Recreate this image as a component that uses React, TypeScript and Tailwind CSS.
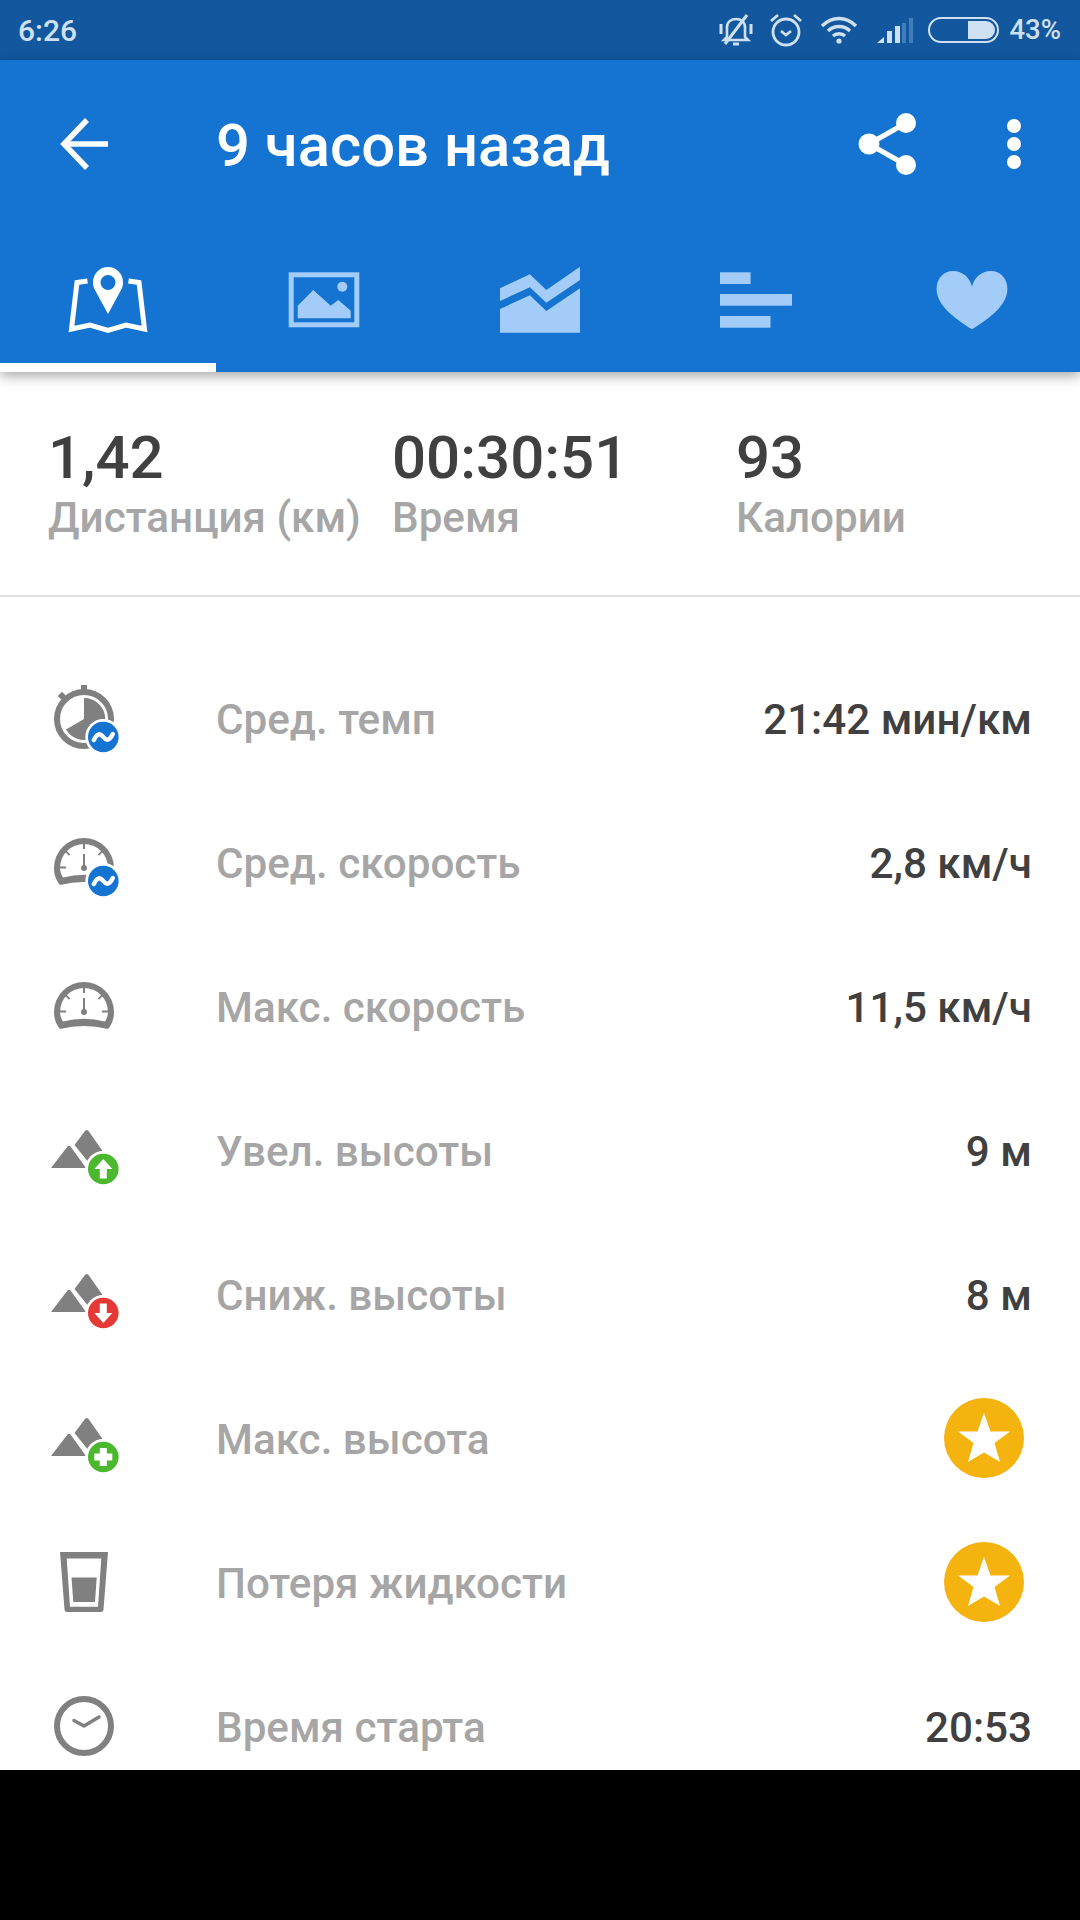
import React from 'react';

const GRAY = '#808080';
const LIGHT = '#A3CDF8';
const BLUE = '#1574D1';

const Wave = () => (
    <path d="M-9.5 2 C-6 -5 -3 -5 0 -1 C3 3 6 3 9.5 -4" fill="none" stroke="white" strokeWidth="4.4" strokeLinecap="round" transform="translate(0 1)" />
);

const Badge = ({ color, children }: { color: string; children: React.ReactNode }) => (
    <g transform="translate(55.3 57)">
        <circle r="18" fill="white" />
        <circle r="15.3" fill={color} />
        {children}
    </g>
);

const Stopwatch = () => (
    <svg width="80" height="80" viewBox="0 0 80 80">
        <circle cx="36" cy="39" r="27" fill="none" stroke={GRAY} strokeWidth="6" />
        <rect x="33" y="5" width="6" height="6" fill={GRAY} />
        <rect x="11" y="13" width="6" height="6" fill={GRAY} transform="rotate(-45 14 16)" />
        <path d="M36 39 V18 A21 21 0 1 1 18 49.5 Z" fill={GRAY} />
        <Badge color={BLUE}><Wave /></Badge>
    </svg>
);

const GaugeBody = () => (
    <g fill={GRAY}>
        <path fillRule="evenodd" d="M12 61 C8 56 6 51 6 44 A30 30 0 0 1 66 44 C66 51 64 56 60 61 Q36 55 12 61Z M15 53.5 C13 50 12 47 12 44 A24 24 0 0 1 60 44 C60 47 59 50 57 53.5 Q36 48 15 53.5Z" />
        <rect x="35" y="19" width="2" height="6" />
        <rect x="12" y="42.5" width="6" height="2" />
        <rect x="54" y="42.5" width="6" height="2" />
        <rect x="18.5" y="26" width="2" height="6" transform="rotate(-45 19.5 29)" />
        <rect x="51.5" y="26" width="2" height="6" transform="rotate(45 52.5 29)" />
        <rect x="35" y="30" width="2" height="13" />
        <circle cx="36" cy="44" r="3" />
    </g>
);

const AvgGauge = () => (
    <svg width="80" height="80" viewBox="0 0 80 80">
        <GaugeBody />
        <Badge color={BLUE}><Wave /></Badge>
    </svg>
);

const MaxGauge = () => (
    <svg width="80" height="80" viewBox="0 0 80 80">
        <GaugeBody />
    </svg>
);

const Mountain = ({ color, children }: { color: string; children: React.ReactNode }) => (
    <svg width="80" height="80" viewBox="0 0 80 80">
        <path d="M3 56 L19.5 34.5 Q21 33 22.5 34.5 L38 56 Z" fill={GRAY} />
        <path d="M26.5 33 L37 19 Q38.7 17 40.5 19 L56 41 L41 51 Z" fill={GRAY} />
        <Badge color={color}>{children}</Badge>
    </svg>
);

const ArrowUp = () => <path d="M0 -10 L9 0 H3.5 V9.5 H-3.5 V0 H-9 Z" fill="white" />;
const ArrowDown = () => <path d="M0 10 L9 0 H3.5 V-9.5 H-3.5 V0 H-9 Z" fill="white" />;
const Plus = () => <path d="M-3.5 -9 H3.5 V-3.5 H9 V3.5 H3.5 V9 H-3.5 V3.5 H-9 V-3.5 H-3.5 Z" fill="white" />;

const Glass = () => (
    <svg width="80" height="80" viewBox="0 0 80 80">
        <path fillRule="evenodd" d="M12 8 H60 L55.5 65.5 Q55.3 68 53 68 H19 Q16.7 68 16.5 65.5 Z M18.7 14.5 L22 62.7 H50 L53.3 14.5 Z" fill={GRAY} />
        <path d="M23.5 33.5 H48.7 L47 58 H25.3 Z" fill={GRAY} />
    </svg>
);

const Clock = () => (
    <svg width="80" height="80" viewBox="0 0 80 80">
        <circle cx="36" cy="38" r="27" fill="none" stroke={GRAY} strokeWidth="6" />
        <path d="M26 32.5 L36 38 L51 29" fill="none" stroke={GRAY} strokeWidth="3.5" strokeLinecap="round" strokeLinejoin="round" />
    </svg>
);

const StarBadge = () => (
    <svg width="80" height="80" viewBox="-40 -40 80 80" className="mr-[8px] mb-[4px]">
        <circle r="40" fill="#F4B30F" />
        <path d="M0 -25 L6.5 -6.5 L26 -6.5 L10.5 5 L16 24 L0 14.5 L-16 24 L-10.5 5 L-26 -6.5 L-6.5 -6.5 Z" fill="white" />
    </svg>
);

const TabIcon = ({ children }: { children: React.ReactNode }) => (
    <div className="flex items-center justify-center h-[144px]">
        <svg width="80" height="80" viewBox="0 0 80 80">{children}</svg>
    </div>
);

const rows = [
    { icon: <Stopwatch />, label: 'Сред. темп', value: '21:42 мин/км' },
    { icon: <AvgGauge />, label: 'Сред. скорость', value: '2,8 км/ч' },
    { icon: <MaxGauge />, label: 'Макс. скорость', value: '11,5 км/ч' },
    { icon: <Mountain color="#4CB82E"><ArrowUp /></Mountain>, label: 'Увел. высоты', value: '9 м' },
    { icon: <Mountain color="#E53935"><ArrowDown /></Mountain>, label: 'Сниж. высоты', value: '8 м' },
    { icon: <Mountain color="#4CB82E"><Plus /></Mountain>, label: 'Макс. высота', value: null },
    { icon: <Glass />, label: 'Потеря жидкости', value: null },
    { icon: <Clock />, label: 'Время старта', value: '20:53' },
];

const stats = [
    { value: '1,42', label: 'Дистанция (км)', width: 'w-[344px]' },
    { value: '00:30:51', label: 'Время', width: 'w-[344px]' },
    { value: '93', label: 'Калории', width: 'w-[300px]' },
];

const StatusBar = () => (
    <div className="flex items-center h-[60px] bg-[#13579F] pl-[18px] pr-[19px] text-[#CFE0F2] text-[30px] font-medium">
        <span>6:26</span>
        <div className="flex items-center ml-auto">
            <svg width="36" height="34" viewBox="0 0 36 34" className="mr-[15px]" fill="none" stroke="#CFE0F2" strokeWidth="2.6">
                <path d="M9 24 V14 C9 9 13 6 18 6 C23 6 27 9 27 14 V24 L30 27 H6 Z" />
                <path d="M15 31 H21" strokeWidth="3" />
                <path d="M3 11 V21 M33 11 V21" strokeWidth="3" />
                <path d="M29 2 L7 31" strokeWidth="3" />
            </svg>
            <svg width="34" height="34" viewBox="0 0 34 34" className="mr-[17px]" fill="none" stroke="#CFE0F2" strokeWidth="2.8">
                <circle cx="17" cy="19" r="13" />
                <path d="M12 18 L17 22 L22 18" />
                <path d="M2 8 L9 2 M32 8 L25 2" />
            </svg>
            <svg width="38" height="28" viewBox="0 0 38 28" className="mr-[19px]" fill="none" stroke="#CFE0F2" strokeWidth="3.4">
                <path d="M2 10 C12 0 26 0 36 10" />
                <path d="M8 15 C14 9 24 9 30 15" />
                <path d="M13 20 C16 17 22 17 25 20" />
                <circle cx="19" cy="25" r="2.6" fill="#CFE0F2" stroke="none" />
            </svg>
            <svg width="36" height="25" viewBox="0 0 36 25" className="mr-[15px]">
                <path d="M0 25 L7 19 V25 Z" fill="#CFE0F2" />
                <rect x="10" y="13" width="5" height="12" fill="#CFE0F2" />
                <rect x="18" y="8" width="5" height="17" fill="#CFE0F2" />
                <rect x="25" y="5" width="4" height="20" fill="#3F7DBB" />
                <rect x="32" y="0" width="4" height="25" fill="#3F7DBB" />
            </svg>
            <div className="relative w-[71px] h-[26px] rounded-full border-[2.5px] border-[#CFE0F2] mr-[10px]">
                <div className="absolute top-[2px] bottom-[2px] right-[2px] w-[27px] rounded-r-full bg-[#CFE0F2]" />
            </div>
            <span className="text-[27.5px]">43%</span>
        </div>
    </div>
);

const AppBar = () => (
    <div className="relative bg-[#1574D1] shadow-[0_4px_12px_rgba(0,0,0,0.35)]">
        <div className="flex items-center h-[168px] pl-[60px]">
            <svg width="50" height="52" viewBox="0 0 50 52" fill="none" stroke="white" strokeWidth="5.5">
                <path d="M48 26 H4" />
                <path d="M27 2 L4 26 L27 50" />
            </svg>
            <span className="ml-[106px] mt-[6px] text-[59.8px] font-medium text-white whitespace-nowrap">9 часов назад</span>
            <svg width="60" height="62" viewBox="0 0 60 62" className="ml-auto mr-[88px]" fill="white">
                <path d="M11 31 L48 10 M11 31 L48 52" stroke="white" strokeWidth="5" />
                <circle cx="11" cy="31" r="10.5" />
                <circle cx="48" cy="10" r="10" />
                <circle cx="48" cy="52" r="10" />
            </svg>
            <svg width="16" height="50" viewBox="0 0 16 50" className="mr-[58px]" fill="white">
                <circle cx="8" cy="7" r="7" />
                <circle cx="8" cy="25" r="7" />
                <circle cx="8" cy="43" r="7" />
            </svg>
        </div>
        <div className="grid grid-cols-5">
            <div className="border-b-[9px] border-white h-[144px] flex justify-center pt-[32px]">
                <svg width="80" height="80" viewBox="0 0 80 80">
                    <path d="M19.5 21 L9 22.5 L3.5 69 L22 65 L40 70.5 L58 65 L76.5 69 L71 22.5 L60.5 21" fill="none" stroke="white" strokeWidth="5" />
                    <path fillRule="evenodd" d="M40 54 L27.5 31 C25.5 27.5 25 25.5 25 22 A15 15 0 0 1 55 22 C55 25.5 54.5 27.5 52.5 31 Z M40 15 A7.5 7.5 0 1 0 40 30 A7.5 7.5 0 1 0 40 15 Z" fill="white" />
                </svg>
            </div>
            <TabIcon>
                <rect x="7.2" y="14.8" width="65.6" height="50" fill="none" stroke={LIGHT} strokeWidth="5" />
                <path d="M13.7 45.7 L29.3 30 L46.7 45.7 L54.3 40 L66.7 50.7 V58.3 H13.7 Z" fill={LIGHT} />
                <circle cx="58.3" cy="26.7" r="5" fill={LIGHT} />
            </TabIcon>
            <TabIcon>
                <path d="M0 28.3 L29.9 14.3 L46.3 30 L80 6.7 V20 L46.3 42.7 L29.9 27.3 L0 41 Z" fill={LIGHT} />
                <path d="M0 49 L29.9 35.3 L46.3 51 L80 28.3 V72.7 H0 Z" fill={LIGHT} />
            </TabIcon>
            <TabIcon>
                <rect x="4" y="12.3" width="30.6" height="11.7" fill={LIGHT} />
                <rect x="4" y="34" width="72" height="11.7" fill={LIGHT} />
                <rect x="4" y="56" width="50.5" height="11.7" fill={LIGHT} />
            </TabIcon>
            <TabIcon>
                <path d="M40 69.3 C22 58 4.6 45 4.6 29 C4.6 18 12 11 21 11 C31 11 38 18 40 26.7 C42 18 49 11 59 11 C68 11 75.4 18 75.4 29 C75.4 45 58 58 40 69.3Z" fill={LIGHT} />
            </TabIcon>
        </div>
    </div>
);

const App: React.FC = () => {
    return (
        <div className="w-[1080px] h-[1920px] bg-black font-['Roboto',sans-serif]">
            <div className="h-[1770px] bg-white overflow-hidden">
                <StatusBar />
                <AppBar />
                <div className="flex h-[225px] pl-[48px] pt-[53px] border-b-[2px] border-[#DFDFDF]">
                    {stats.map((stat) => (
                        <div key={stat.label} className={stat.width}>
                            <div className="text-[60px] leading-[66px] font-medium text-[#404040]">{stat.value}</div>
                            <div className="text-[42.2px] leading-[54px] font-medium text-[#A6A6A6] whitespace-nowrap">{stat.label}</div>
                        </div>
                    ))}
                </div>
                <div className="pt-[51px]">
                    {rows.map((row) => (
                        <div key={row.label} className="flex items-center h-[144px] pl-[48px] pr-[48px]">
                            <div className="w-[168px] shrink-0">{row.icon}</div>
                            <span className="text-[42.2px] font-medium text-[#A6A6A6] mb-[1px]">{row.label}</span>
                            <div className="ml-auto text-[42.2px] font-medium text-[#404040] mb-[1px]">
                                {row.value ?? <StarBadge />}
                            </div>
                        </div>
                    ))}
                </div>
            </div>
        </div>
    );
};

export default App;
